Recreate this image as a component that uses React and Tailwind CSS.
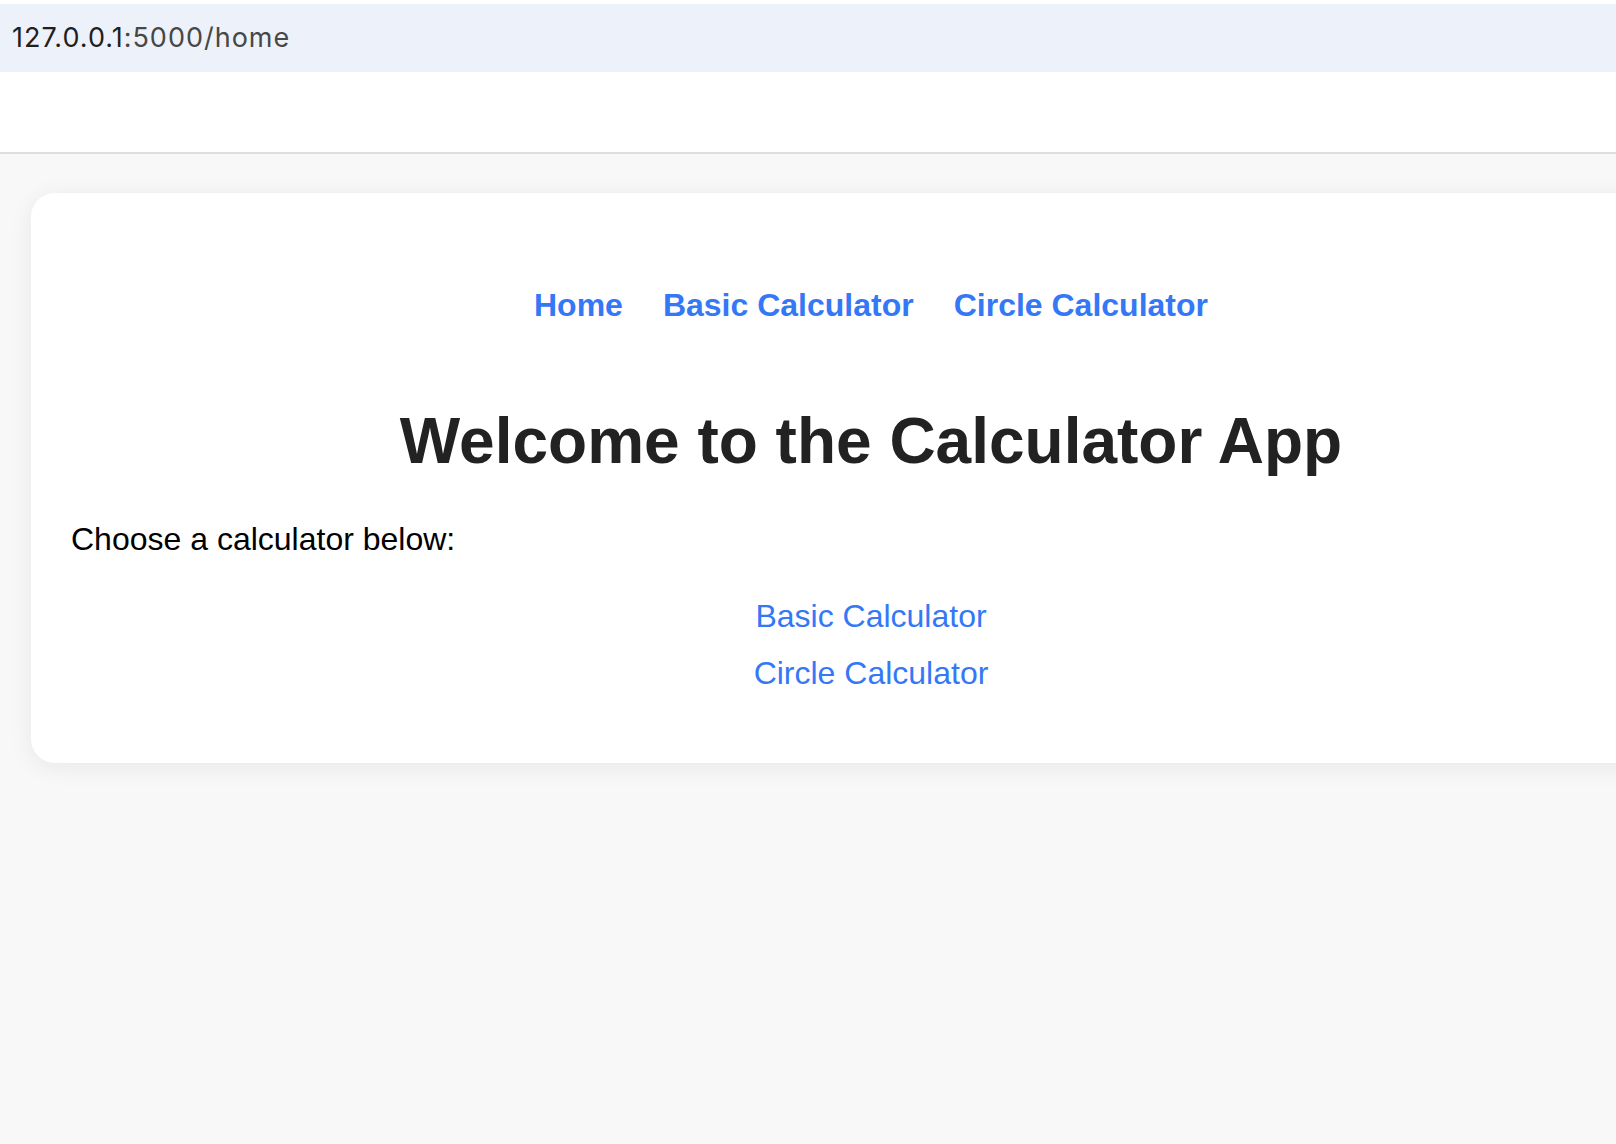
export default function App() {
  const sans = { fontFamily: '"Liberation Sans", Arial, sans-serif' };
  return (
    <div className="w-[1616px] h-[1144px] overflow-hidden bg-[#f8f8f8] flex flex-col">
      <div className="h-[4px] bg-white shrink-0" />
      <div
        className="h-[68px] bg-[#edf2fa] flex items-center pl-[12px] text-[27px] tracking-[1px] shrink-0"
        style={{ fontFamily: 'Inter, "Noto Sans", sans-serif' }}
      >
        <span className="text-[#1f1f1f]">127.0.0.1</span>
        <span className="text-[#474747]">:5000/home</span>
      </div>
      <div className="h-[80px] bg-white border-b-2 border-[#dedede] shrink-0 box-content" />
      <div className="pt-[39px] pl-[31px]">
        <div
          className="w-[1680px] bg-white rounded-[24px] shadow-[0_4px_24px_rgba(0,0,0,0.07)] pt-[92px] px-[40px] pb-[70px] flex flex-col"
          style={sans}
        >
          <nav className="flex justify-center gap-[40px] text-[32px] leading-[40px] font-bold text-[#3478f6]">
            <a href="#">Home</a>
            <a href="#">Basic Calculator</a>
            <a href="#">Circle Calculator</a>
          </nav>
          <h1 className="mt-[79px] text-center text-[64px] leading-[74px] font-bold text-[#222222]">
            Welcome to the Calculator App
          </h1>
          <p className="mt-[41px] text-[32px] leading-[40px] text-black">Choose a calculator below:</p>
          <div className="mt-[37px] flex flex-col items-center gap-[17px] text-[32px] leading-[40px] text-[#3478f6]">
            <a href="#">Basic Calculator</a>
            <a href="#">Circle Calculator</a>
          </div>
        </div>
      </div>
    </div>
  );
}
